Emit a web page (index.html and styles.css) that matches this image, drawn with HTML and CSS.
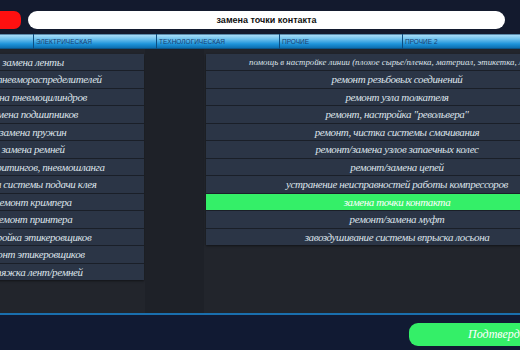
FILE: index.html
```html
<!DOCTYPE html>
<html lang="ru">
<head>
    <meta charset="UTF-8">
    <meta name="viewport" content="width=device-width, initial-scale=1.0">
    <title>Выбор работ</title>
    <link rel="stylesheet" href="styles.css">
</head>
<body>
    <div class="header">
        <div class="red-btn"></div>
        <div class="search">замена точки контакта</div>
    </div>

    <div class="tabs">
        <div class="tab"></div>
        <div class="tab">ЭЛЕКТРИЧЕСКАЯ</div>
        <div class="tab">ТЕХНОЛОГИЧЕСКАЯ</div>
        <div class="tab">ПРОЧИЕ</div>
        <div class="tab">ПРОЧИЕ 2</div>
    </div>

    <div class="content">
        <div class="list">
            <div class="row">замена ленты</div>
            <div class="row">замена пневмораспределителей</div>
            <div class="row">замена пневмоцилиндров</div>
            <div class="row">замена подшипников</div>
            <div class="row">замена пружин</div>
            <div class="row">замена ремней</div>
            <div class="row">замена фитингов, пневмошланга</div>
            <div class="row">чистка системы подачи клея</div>
            <div class="row">ремонт кримпера</div>
            <div class="row">ремонт принтера</div>
            <div class="row">настройка этикеровщиков</div>
            <div class="row">ремонт этикеровщиков</div>
            <div class="row">натяжка лент/ремней</div>
        </div>
        <div class="spacer"></div>
        <div class="list">
            <div class="row small">помощь в настройке линии (плохое сырье/пленка, материал, этикетка, лента)</div>
            <div class="row">ремонт резьбовых соединений</div>
            <div class="row">ремонт узла толкателя</div>
            <div class="row">ремонт, настройка "револьвера"</div>
            <div class="row">ремонт, чистка системы смачивания</div>
            <div class="row">ремонт/замена узлов запаечных колес</div>
            <div class="row">ремонт/замена цепей</div>
            <div class="row">устранение неисправностей работы компрессоров</div>
            <div class="row active">замена точки контакта</div>
            <div class="row">ремонт/замена муфт</div>
            <div class="row">завоздушивание системы впрыска лосьона</div>
        </div>
    </div>

    <div class="footer">
        <button class="confirm">Подтвердить</button>
    </div>
</body>
</html>
```

FILE: styles.css
```css
body {
    margin: 0;
    width: 520px;
    height: 350px;
    overflow: hidden;
    background-color: #22252c;
    font-family: "Liberation Serif", serif;
    display: flex;
    flex-direction: column;
}
.header {
    height: 34px;
    background-color: #131a2e;
    display: flex;
    align-items: center;
    gap: 7px;
    padding-top: 6px;
    box-sizing: border-box;
    margin-left: -20px;
}
.red-btn {
    width: 41px;
    height: 18px;
    background-color: #ff1010;
    border-radius: 7px;
}
.search {
    width: 477px;
    height: 18px;
    line-height: 18px;
    background-color: #fff;
    border-radius: 9px;
    text-align: center;
    font-family: "Liberation Sans", Arial, sans-serif;
    font-weight: bold;
    font-size: 9px;
    color: #111;
}
.tabs {
    height: 15px;
    display: flex;
    margin-left: -90px;
    background: linear-gradient(#0d3a60 0, #a8dcf8 1px, #6fc2ee 5px, #1d93da 10px, #0d6fb0 14px, #0a3b63 15px);
}
.tab {
    flex: 0 0 123px;
    box-sizing: border-box;
    border-left: 1px solid #0d4d80;
    padding-left: 2px;
    font-family: "Liberation Sans", Arial, sans-serif;
    font-size: 6.5px;
    line-height: 16px;
    color: #173f73;
}
.content {
    flex: 1;
    display: grid;
    grid-template-columns: 222px 62px 382px;
    align-items: start;
    margin-left: -78px;
    padding-top: 5px;
}
.list {
    display: flex;
    flex-direction: column;
    gap: 1px;
    background-color: #1a1f28;
    box-shadow: 0 1px 2px rgba(0, 0, 0, 0.5);
}
.spacer {
    height: 264px;
    margin: -5px 2px 0 1px;
    background-color: #1e2128;
}
.row {
    height: 16.5px;
    line-height: 16.5px;
    background-color: #2b3546;
    color: #dde3ea;
    font-style: italic;
    font-size: 11px;
    letter-spacing: -0.4px;
    text-align: center;
    white-space: nowrap;
}
.row.small {
    font-size: 8.8px;
    letter-spacing: 0;
}
.row.active {
    background-color: #34ef68;
    color: #fff;
}
.footer {
    height: 36px;
    border-top: 2px solid #1a6fae;
    background-color: #111a33;
    display: flex;
    align-items: center;
}
.confirm {
    flex-shrink: 0;
    margin-left: 409px;
    margin-top: 4px;
    width: 190px;
    height: 23px;
    padding: 0;
    border: none;
    border-radius: 9px;
    background-color: #34ef68;
    color: #fff;
    font-family: "Liberation Serif", serif;
    font-style: italic;
    font-size: 12px;
}
```
